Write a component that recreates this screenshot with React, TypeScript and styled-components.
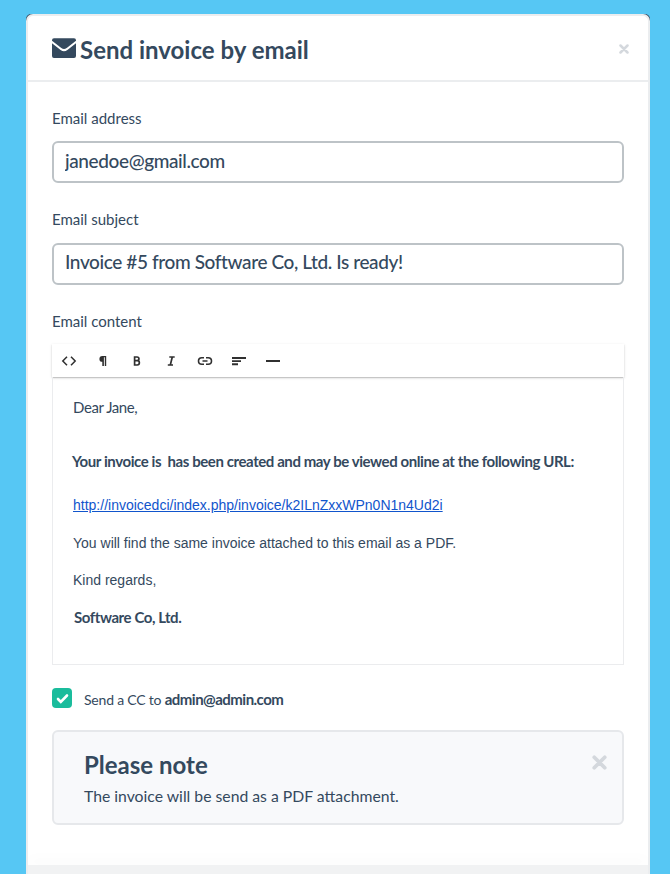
import React from "react";
import styled, { createGlobalStyle } from "styled-components";

const GlobalStyle = createGlobalStyle`
  * { box-sizing: border-box; }
  body {
    margin: 0;
    background: #56c7f4;
    color: #34495e;
    font-family: Lato, "Liberation Sans", sans-serif;
  }
  h1, h2, p { margin: 0; }
`;

const Page = styled.div`
  height: 874px;
  padding: 14px 20px 0 26px;
  overflow: hidden;
`;

const Corners = styled.div`
  height: 860px;
  border-radius: 5px 5px 0 0;
  background: #34495e;
`;

const Dialog = styled.main`
  display: flex;
  flex-direction: column;
  height: 860px;
  border: 2px solid #ebedef;
  border-bottom: 0;
  border-radius: 7px 7px 0 0;
  background: #fff;
  overflow: hidden;
`;

const Header = styled.header`
  display: flex;
  align-items: center;
  height: 66px;
  padding: 0 19px 0 24px;
  border-bottom: 2px solid #ebedef;
`;

const Title = styled.h1`
  flex: 1;
  margin: 4px 0 0 4px;
  font-size: 24px;
  line-height: 32px;
  font-weight: 700;
`;

const CloseButton = styled.button<{ $size: number }>`
  display: flex;
  width: ${(p) => p.$size}px;
  height: ${(p) => p.$size}px;
  padding: 0;
  border: 0;
  background: none;
  color: #d4d8dd;
`;

const HeaderClose = styled(CloseButton)`
  margin-top: 2px;
`;

const Form = styled.div`
  display: flex;
  flex: 1;
  flex-direction: column;
  padding: 24px 24px 0;
`;

const Label = styled.label<{ $height?: number }>`
  height: ${(p) => p.$height ?? 35}px;
  font-size: 15px;
  line-height: 24px;
`;

const Input = styled.input<{ $lift?: number }>`
  width: 100%;
  height: 42px;
  margin-bottom: 24px;
  padding: 0 11px ${(p) => p.$lift ?? 3}px;
  border: 2px solid #bdc3c7;
  border-radius: 6px;
  outline: none;
  background: #fff;
  color: #34495e;
  font: 500 19px Lato, sans-serif;
  letter-spacing: -0.39px;
`;

const Toolbar = styled.div`
  display: flex;
  align-items: center;
  gap: 14px;
  width: 572px;
  height: 33px;
  padding-left: 7px;
  background: #fff;
  box-shadow: 0 1px 3px rgba(0, 0, 0, 0.12), 0 1px 1px rgba(0, 0, 0, 0.16);
`;

const Tool = styled.button`
  display: flex;
  align-items: center;
  justify-content: center;
  width: 20px;
  height: 20px;
  padding: 0;
  border: 0;
  background: none;
  color: #303030;
`;

const Editor = styled.article`
  height: 288px;
  padding: 19px 19px 0 20px;
  border: 1px solid #ebecee;
  border-top: 0;
`;

const Line = styled.p<{ $gap?: number; $bold?: boolean; $system?: boolean; $shift?: number }>`
  height: 24px;
  margin: 0 0 ${(p) => p.$gap ?? 0}px ${(p) => p.$shift ?? 0}px;
  font-family: ${(p) => (p.$system ? '"Liberation Sans", Arial' : "Lato")}, sans-serif;
  font-size: ${(p) => (p.$system ? 14 : 15)}px;
  font-weight: ${(p) => (p.$bold ? 700 : 400)};
  letter-spacing: ${(p) => (p.$system ? 0 : -0.42)}px;
  line-height: ${(p) => (p.$system ? 24 : 22)}px;
  white-space: pre;
`;

const Link = styled.a`
  color: #1155cc;
  text-decoration: underline;
`;

const CcRow = styled.label`
  display: flex;
  align-items: center;
  gap: 12px;
  height: 20px;
  margin: 23px 0 22px;
  font-size: 14px;
  letter-spacing: -0.2px;

  b {
    font-size: 15px;
    letter-spacing: -0.52px;
  }
`;

const Check = styled.span`
  display: flex;
  width: 20px;
  height: 20px;
  border-radius: 4px;
  background: #1abc9c;
`;

const CcText = styled.span`
  padding-top: 3px;
  line-height: 20px;
`;

const Note = styled.section`
  display: flex;
  justify-content: space-between;
  height: 95px;
  padding: 17px 15px 0 30px;
  border: 2px solid #e6e8eb;
  border-radius: 6px;
  background: #f8f9fb;
`;

const NoteTitle = styled.h2`
  font-size: 24px;
  line-height: 32px;
`;

const NoteText = styled.p`
  margin-top: 3px;
  font-size: 15.75px;
  line-height: 24px;
`;

const NoteClose = styled.div`
  padding-top: 6px;
`;

const Footer = styled.footer`
  height: 9px;
  background: #f1f2f3;
  box-shadow: 0 -8px 12px rgba(0, 0, 0, 0.015);
`;

const Cross = () => (
  <svg width="100%" height="100%" viewBox="0 0 16 16" fill="none" stroke="currentColor" strokeWidth="4" strokeLinecap="round">
    <path d="M2.4 2.4 13.6 13.6M13.6 2.4 2.4 13.6" />
  </svg>
);

const Envelope = () => (
  <svg width="24" height="20" viewBox="0 0 24 20" fill="#34495e">
    <path d="M2 .3h20q2 0 2 2v.4L14.7 10q-2.7 2-5.4 0L0 2.7v-.4Q0 .3 2 .3Z" />
    <path d="M0 5.2 8.6 12q3.4 2.4 6.8 0L24 5.2V18q0 2-2 2H2q-2 0-2-2Z" />
  </svg>
);

const toolIcons: [string, React.ReactNode][] = [
  ["Code", <path d="M8 5.7 3.8 10 8 14.3M12 5.7l4.2 4.3-4.2 4.3" fill="none" stroke="currentColor" strokeWidth="1.5" />],
  ["Paragraph", <path d="M13.2 5v10h-1.4V6.2h-.9V15H9.3v-4.2A2.9 2.9 0 0 1 9.3 5Z" fill="currentColor" />],
  ["Bold", <path d="M7.6 6h2.4c2.6 0 2.6 3.7 0 3.7H7.6h2.6c2.9 0 2.9 4.3 0 4.3H7.6Z" fill="none" stroke="currentColor" strokeWidth="1.7" />],
  ["Italic", <path d="M8.3 6h5.4M6.8 14h5.2M11.3 6l-2 8" fill="none" stroke="currentColor" strokeWidth="1.7" />],
  ["Link", <path d="M9 6.7H6.8a3.3 3.3 0 0 0 0 6.6H9M11 6.7h2.2a3.3 3.3 0 0 1 0 6.6H11M7.5 10h5" fill="none" stroke="currentColor" strokeWidth="1.6" />],
  ["Align", <path d="M3 6h14v2H3zM3 9.2h9v1.8H3zM3 12.3h6v1.9H3z" fill="currentColor" />],
  ["Rule", <path d="M3 9h14v2H3z" fill="currentColor" />],
];

export default function App() {
  return (
    <Page>
      <GlobalStyle />
      <Corners>
        <Dialog>
          <Header>
            <Envelope />
            <Title>Send invoice by email</Title>
            <HeaderClose $size={10} aria-label="Close"><Cross /></HeaderClose>
          </Header>
          <Form>
            <Label htmlFor="address">Email address</Label>
            <Input id="address" defaultValue="janedoe@gmail.com" />
            <Label htmlFor="subject" $height={36}>Email subject</Label>
            <Input id="subject" $lift={5} defaultValue="Invoice #5 from Software Co, Ltd. Is ready!" />
            <Label as="div">Email content</Label>
            <Toolbar>
              {toolIcons.map(([name, icon]) => (
                <Tool key={name} aria-label={name}>
                  <svg width="20" height="20" viewBox="0 0 20 20">{icon}</svg>
                </Tool>
              ))}
            </Toolbar>
            <Editor>
              <Line $gap={30}>Dear Jane,</Line>
              <Line $bold $shift={-1} $gap={19}>{"Your invoice is  has been created and may be viewed online at the following URL:"}</Line>
              <Line $system $gap={14}><Link>http://invoicedci/index.php/invoice/k2ILnZxxWPn0N1n4Ud2i</Link></Line>
              <Line $system $gap={13}>You will find the same invoice attached to this email as a PDF.</Line>
              <Line $system $gap={14}>Kind regards,</Line>
              <Line $bold $shift={1}>Software Co, Ltd.</Line>
            </Editor>
            <CcRow>
              <Check>
                <svg width="20" height="20" viewBox="0 0 20 20" fill="none" stroke="#fff" strokeWidth="2.6" strokeLinecap="round">
                  <path d="m6 11 2.8 2.8 6.2-6.3" />
                </svg>
              </Check>
              <CcText>Send a CC to <b>admin@admin.com</b></CcText>
            </CcRow>
            <Note>
              <div>
                <NoteTitle>Please note</NoteTitle>
                <NoteText>The invoice will be send as a PDF attachment.</NoteText>
              </div>
              <NoteClose>
                <CloseButton $size={15} aria-label="Dismiss note"><Cross /></CloseButton>
              </NoteClose>
            </Note>
          </Form>
          <Footer />
        </Dialog>
      </Corners>
    </Page>
  );
}
